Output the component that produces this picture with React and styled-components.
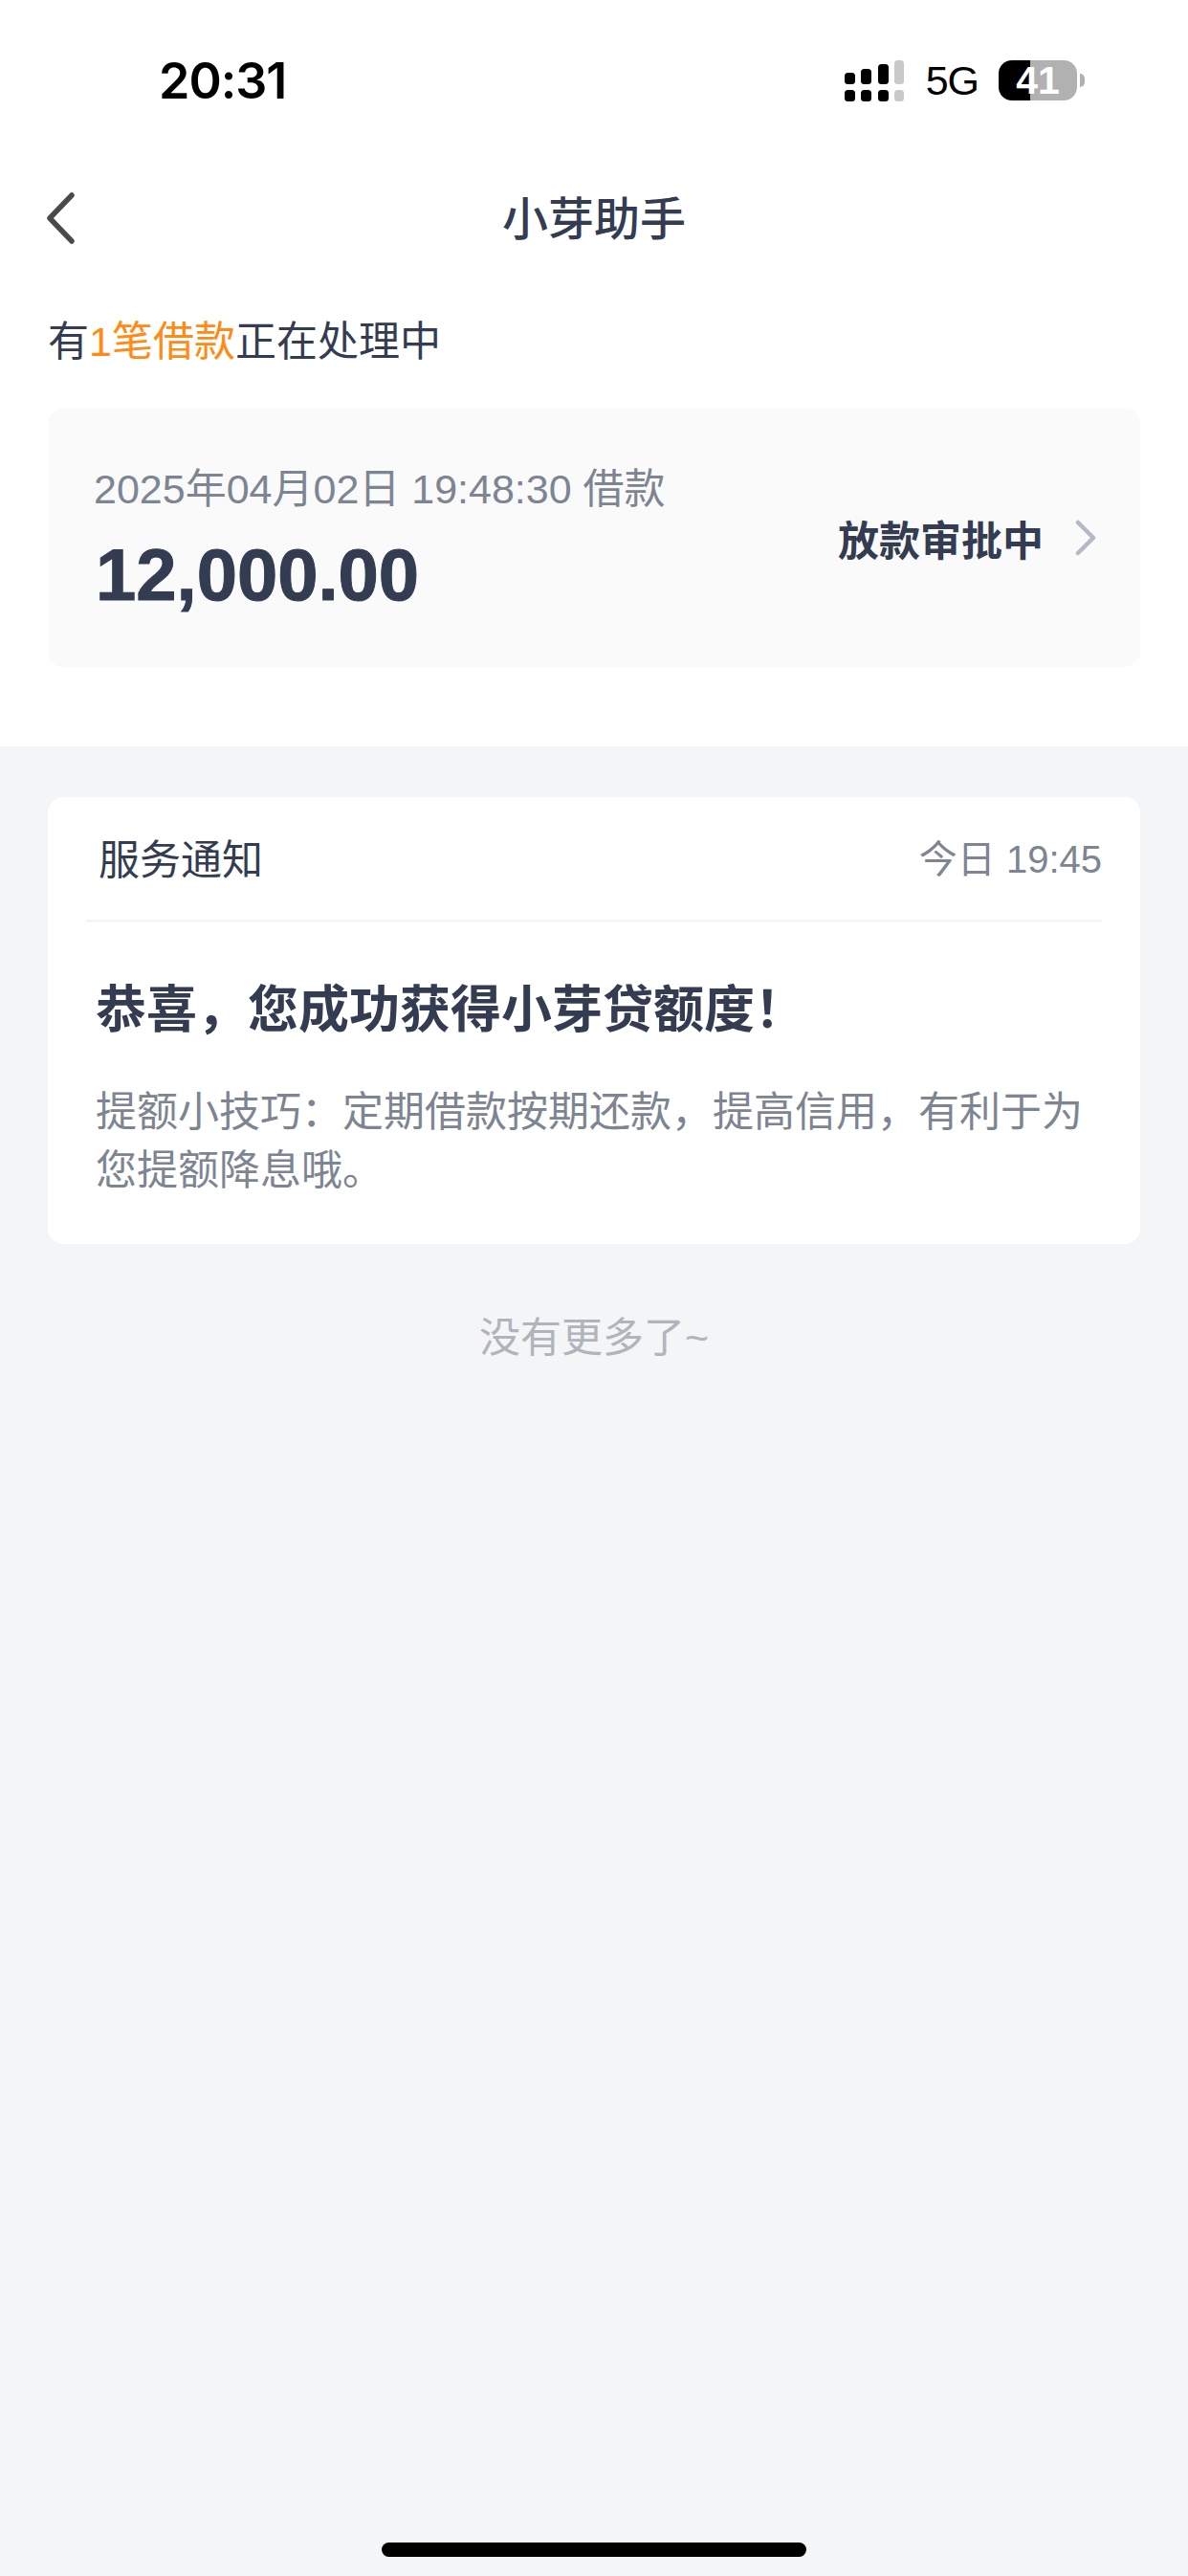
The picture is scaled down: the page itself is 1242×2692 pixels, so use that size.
import React from "react";
import styled, { createGlobalStyle } from "styled-components";

const GlobalStyle = createGlobalStyle`
  html, body { margin: 0; padding: 0; background: #f4f5f7; }
  * { box-sizing: border-box; }
  body { font-family: "Liberation Sans", "Noto Sans CJK SC", sans-serif; }
`;

const Page = styled.div`
  width: 1242px;
  height: 2692px;
  display: flex;
  flex-direction: column;
  background: #f4f5f7;
  color: #333c50;
`;

const TopSection = styled.div`
  background: #fff;
  height: 780px;
  padding-top: 56px;
`;

const StatusBar = styled.div`
  height: 56px;
  display: flex;
  align-items: center;
  padding: 0 116px 0 166px;
  color: #000;
`;

const Clock = styled.div`
  font-family: Inter, sans-serif;
  font-size: 52px;
  font-weight: 600;
  letter-spacing: -1px;
`;

const StatusIcons = styled.div`
  margin-left: auto;
  display: flex;
  align-items: center;
`;

const Network = styled.div`
  font-size: 43px;
  letter-spacing: -1px;
  margin: 0 21px 0 23px;
`;

const Battery = styled.div`
  position: relative;
  width: 82px;
  height: 42px;
  border-radius: 14px;
  background: linear-gradient(to right, #000 40%, #b1b1b1 40%);
  color: #fff;
  font-size: 41px;
  font-weight: 700;
  line-height: 42px;
  text-align: center;
  &::after {
    content: "";
    position: absolute;
    right: -8px;
    top: 14px;
    width: 5px;
    height: 14px;
    border-radius: 0 5px 5px 0;
    background: #b1b1b1;
  }
`;

const NavBar = styled.div`
  position: relative;
  margin-top: 68px;
  height: 90px;
  display: flex;
  align-items: center;
  justify-content: center;
`;

const BackIcon = styled.svg`
  position: absolute;
  left: 46px;
  top: 21px;
`;

const NavTitle = styled.div`
  font-size: 48px;
  font-weight: 500;
`;

const Notice = styled.div`
  margin-top: 57px;
  padding-left: 50px;
  font-size: 43px;
  line-height: 60px;
`;

const Accent = styled.span`
  color: #ff8a14;
`;

const LoanCard = styled.div`
  margin: 40px 50px 0;
  height: 270px;
  padding: 0 45px 0 48px;
  border-radius: 16px;
  background: #fafafa;
  display: flex;
  align-items: center;
  justify-content: space-between;
`;

const LoanDate = styled.div`
  font-size: 43px;
  line-height: 60px;
  color: #7d8592;
`;

const LoanAmount = styled.div`
  margin-top: 18px;
  padding-left: 2px;
  font-size: 76px;
  line-height: 84px;
  font-weight: 700;
  -webkit-text-stroke: 1px #333c50;
`;

const LoanStatus = styled.div`
  display: flex;
  align-items: center;
  gap: 32px;
  font-size: 43px;
  font-weight: 700;
`;

const Content = styled.div`
  flex: 1;
  display: flex;
  flex-direction: column;
  padding: 53px 50px 20px;
`;

const MessageCard = styled.div`
  height: 467px;
  border-radius: 16px;
  background: #fff;
  padding: 0 40px;
`;

const MessageHead = styled.div`
  height: 131px;
  border-bottom: 3px solid #f4f5f7;
  display: flex;
  align-items: center;
  justify-content: space-between;
  padding: 0 0 5px 13px;
`;

const MessageType = styled.div`
  font-size: 43px;
`;

const MessageTime = styled.div`
  font-size: 40px;
  color: #7d8592;
`;

const MessageTitle = styled.div`
  margin: 56px 0 0 10px;
  font-size: 53px;
  line-height: 72px;
  font-weight: 700;
`;

const MessageBody = styled.div`
  margin: 40px 0 0 10px;
  font-size: 43px;
  line-height: 61px;
  color: #7d8592;
`;

const NoMore = styled.div`
  margin-top: 68px;
  text-align: center;
  font-size: 43px;
  line-height: 60px;
  color: #b0b4bb;
`;

const HomeBar = styled.div`
  align-self: center;
  margin-top: auto;
  width: 444px;
  height: 15px;
  border-radius: 8px;
  background: #000;
`;

const SignalIcon = () => (
  <svg width="62" height="43" viewBox="0 0 62 43">
    <rect x="0" y="13" width="11" height="12" rx="3.5" />
    <rect x="17" y="9" width="11" height="16" rx="3.5" />
    <rect x="35" y="4" width="11" height="21" rx="3.5" />
    <rect x="52" y="0" width="10" height="25" rx="3.5" fill="#c9c9c9" />
    <rect x="0" y="31" width="11" height="12" rx="3.5" />
    <rect x="17" y="31" width="11" height="12" rx="3.5" />
    <rect x="35" y="31" width="11" height="12" rx="3.5" />
    <rect x="52" y="31" width="10" height="12" rx="3.5" fill="#c9c9c9" />
  </svg>
);

const App = () => {
  return (
    <>
      <GlobalStyle />
      <Page>
        <TopSection>
          <StatusBar>
            <Clock>20:31</Clock>
            <StatusIcons>
              <SignalIcon />
              <Network>5G</Network>
              <Battery>41</Battery>
            </StatusIcons>
          </StatusBar>
          <NavBar>
            <BackIcon width="34" height="54" viewBox="0 0 34 54" fill="none">
              <path d="M29 3 L6 27 L29 51" stroke="#4a4a4a" strokeWidth="5.5" strokeLinecap="round" strokeLinejoin="round" />
            </BackIcon>
            <NavTitle>小芽助手</NavTitle>
          </NavBar>
          <Notice>
            有<Accent>1笔借款</Accent>正在处理中
          </Notice>
          <LoanCard>
            <div>
              <LoanDate>2025年04月02日 19:48:30 借款</LoanDate>
              <LoanAmount>12,000.00</LoanAmount>
            </div>
            <LoanStatus>
              放款审批中
              <svg width="24" height="38" viewBox="0 0 24 38" fill="none">
                <path d="M4 3 L20 19 L4 35" stroke="#b3bac5" strokeWidth="4.5" strokeLinecap="round" strokeLinejoin="round" />
              </svg>
            </LoanStatus>
          </LoanCard>
        </TopSection>
        <Content>
          <MessageCard>
            <MessageHead>
              <MessageType>服务通知</MessageType>
              <MessageTime>今日 19:45</MessageTime>
            </MessageHead>
            <MessageTitle>恭喜，您成功获得小芽贷额度！</MessageTitle>
            <MessageBody>提额小技巧：定期借款按期还款，提高信用，有利于为您提额降息哦。</MessageBody>
          </MessageCard>
          <NoMore>没有更多了~</NoMore>
          <HomeBar />
        </Content>
      </Page>
    </>
  );
};

export default App;
